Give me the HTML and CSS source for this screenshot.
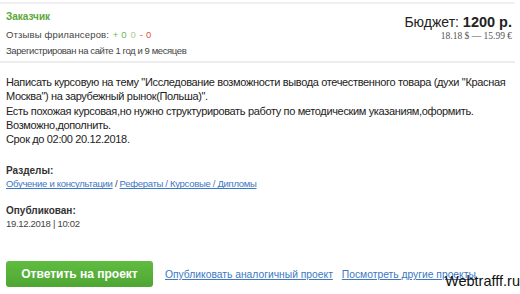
FILE: index.html
```html
<!DOCTYPE html>
<html lang="ru">
<head>
<meta charset="utf-8">
<link rel="stylesheet" href="styles.css">
</head>
<body>
<div class="page">
  <div class="head">
    <div class="customer">
      <div class="role">Заказчик</div>
      <div class="meta reviews">Отзывы фрилансеров: <span class="plus">+ 0</span> <span class="zero">0</span> <span class="minus">- 0</span></div>
      <div class="meta reg">Зарегистрирован на сайте 1 год и 9 месяцев</div>
    </div>
    <div class="budget">
      <div class="sum">Бюджет: <b>1200 р.</b></div>
      <div class="conv">18.18 $ — 15.99 €</div>
    </div>
  </div>
  <div class="desc">
    Написать курсовую на тему "Исследование возможности вывода отечественного товара (духи "Красная Москва") на зарубежный рынок(Польша)".<br>
    Есть похожая курсовая,но нужно структурировать работу по методическим указаниям,оформить.<br>
    Возможно,дополнить.<br>
    Срок до 02:00 20.12.2018.
  </div>
  <div class="block sections">
    <div class="label">Разделы:</div>
    <div class="value"><a href="#">Обучение и консультации</a> / <a href="#">Рефераты / Курсовые / Дипломы</a></div>
  </div>
  <div class="block published">
    <div class="label">Опубликован:</div>
    <div class="value">19.12.2018 | 10:02</div>
  </div>
  <div class="actions">
    <a class="btn" href="#">Ответить на проект</a>
    <a class="link" href="#">Опубликовать аналогичный проект</a>
    <a class="link" href="#">Посмотреть другие проекты</a>
  </div>
  <div class="watermark">Webtrafff.ru</div>
</div>
</body>
</html>
```
FILE: styles.css
```css
html, body {
  margin: 0;
  padding: 0;
  background: #fff;
}
.page {
  position: relative;
  width: 520px;
  height: 294px;
  overflow: hidden;
  padding-top: 2px;
  box-sizing: border-box;
  font-family: "Liberation Sans", Arial, sans-serif;
  color: #333;
}
.head {
  display: flex;
  justify-content: space-between;
  width: 515px;
  box-sizing: border-box;
  border-top: 2px solid #f0f0f0;
  border-bottom: 2px solid #ececec;
  padding: 6px 3px 6px 6px;
  height: 61px;
}
.role {
  color: #5aa83a;
  font-weight: bold;
  font-size: 10px;
  line-height: 13px;
  margin-top: 0;
}
.meta {
  font-size: 9.5px;
  line-height: 13px;
  margin-top: 3px;
  color: #444;
}
.reviews {
  margin-top: 5px;
  letter-spacing: 0.15px;
}
.reviews span {
  margin-left: 1px;
}
.reg {
  letter-spacing: -0.4px;
}
.plus { color: #6cb94f; }
.zero { color: #a8cf98; }
.minus { color: #d9534f; }
.budget {
  text-align: right;
}
.sum {
  font-size: 14px;
  line-height: 18px;
  color: #222;
  margin-top: 3px;
}
.sum b {
  font-size: 14.5px;
}
.conv {
  font-family: "Liberation Serif", serif;
  font-size: 9.5px;
  line-height: 11px;
  color: #555;
  margin-top: 0;
}
.desc {
  padding: 12px 0 0 6px;
  width: 512px;
  box-sizing: border-box;
  font-size: 11px;
  letter-spacing: -0.35px;
  line-height: 14.3px;
  color: #222;
}
.block {
  padding: 18px 6px 0;
}
.block.published {
  padding-top: 14px;
}
.label {
  font-size: 10px;
  font-weight: bold;
  line-height: 13px;
  color: #333;
}
.value {
  font-size: 9.5px;
  line-height: 13px;
  color: #444;
  letter-spacing: -0.3px;
}
.value a {
  color: #3c78c3;
}
.actions {
  display: flex;
  align-items: center;
  padding: 31px 6px 0;
  gap: 9px;
}
.btn {
  display: block;
  width: 147px;
  height: 26px;
  line-height: 26px;
  text-align: center;
  background: linear-gradient(#60bc40, #4ea633);
  border-radius: 3px;
  color: #fff;
  font-weight: bold;
  font-size: 12px;
  text-decoration: none;
  margin-right: 3px;
}
.link {
  font-size: 10.3px;
  color: #3c78c3;
}
.watermark {
  position: absolute;
  left: 445px;
  top: 272px;
  font-size: 14.5px;
  line-height: 18px;
  color: #111;
}
```
